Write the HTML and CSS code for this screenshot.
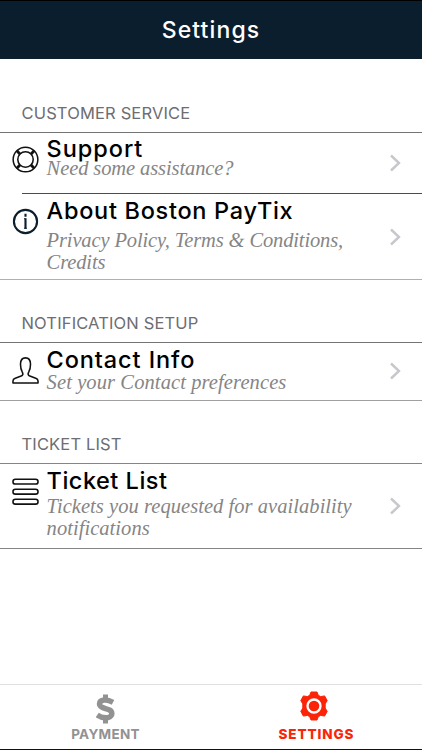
FILE: index.html
```html
<!DOCTYPE html>
<html lang="en">
<head>
    <meta charset="UTF-8">
    <meta name="viewport" content="width=device-width, initial-scale=1.0">
    <title>Settings</title>
    <link rel="stylesheet" href="styles.css">
</head>
<body>

    <!-- Header -->
    <header class="header">
        <h1>Settings</h1>
    </header>

    <main class="content">
        <section class="support-section">
            <h2>CUSTOMER SERVICE</h2>
            <div class="row row-support">
                <svg class="icon" viewBox="0 0 28 28">
                    <circle cx="14" cy="14" r="12.8"/>
                    <circle cx="14" cy="14" r="8"/>
                    <path class="thick" d="M5 5l3.5 3.5M23 5l-3.5 3.5M5 23l3.5-3.5M23 23l-3.5-3.5"/>
                </svg>
                <div class="text">
                    <h3>Support</h3>
                    <p>Need some assistance?</p>
                </div>
                <svg class="chevron" viewBox="0 0 12 18"><path d="M2 1.5l8 7.5-8 7.5"/></svg>
            </div>
            <div class="row row-about">
                <svg class="icon navy" viewBox="0 0 28 28">
                    <circle cx="14" cy="14" r="12"/>
                    <path d="M14 10.5v11M14 6v3"/>
                    <path d="M12.500 11.100h1.500M12.500 21h3" stroke-width="1"/>
                </svg>
                <div class="text">
                    <h3>About Boston PayTix</h3>
                    <p>Privacy Policy, Terms &amp; Conditions,<br>Credits</p>
                </div>
                <svg class="chevron" viewBox="0 0 12 18"><path d="M2 1.5l8 7.5-8 7.5"/></svg>
            </div>
        </section>

        <section class="contact-section">
            <h2>NOTIFICATION SETUP</h2>
            <div class="row row-contact">
                <svg class="icon" viewBox="0 0 28 28">
                    <path d="M1 27v-2.200c0-1.500 1-2.300 2.400-2.800l6.100-2.200c1.900-.8 2.300-2.200 1.200-4C9.200 13.200 8.800 10.500 8.800 7.500 8.800 3.400 10.500.9 14 .9s5.200 2.500 5.200 6.600c0 3-.4 5.700-1.900 8.300-1.100 1.800-.7 3.200 1.200 4l6.100 2.200c1.400.5 2.400 1.300 2.400 2.800V27z"/>
                </svg>
                <div class="text">
                    <h3>Contact Info</h3>
                    <p>Set your Contact preferences</p>
                </div>
                <svg class="chevron" viewBox="0 0 12 18"><path d="M2 1.5l8 7.5-8 7.5"/></svg>
            </div>
        </section>

        <section class="ticket-section">
            <h2>TICKET LIST</h2>
            <div class="row row-ticket">
                <svg class="icon" viewBox="0 0 28 28">
                    <rect x="1" y="1.300" width="26" height="5" rx="2.500"/>
                    <rect x="1" y="11.700" width="26" height="5" rx="2.500"/>
                    <rect x="1" y="22.100" width="26" height="5" rx="2.500"/>
                </svg>
                <div class="text">
                    <h3>Ticket List</h3>
                    <p>Tickets you requested for availability<br>notifications</p>
                </div>
                <svg class="chevron" viewBox="0 0 12 18"><path d="M2 1.5l8 7.5-8 7.5"/></svg>
            </div>
        </section>
    </main>

    <!-- Bottom tabs -->
    <nav class="tabs">
        <a class="tab">
            <svg class="dollar" viewBox="0 0 19 30">
                <path d="M9.500 .5v6M9.500 23.500v6" stroke-width="5"/>
                <path d="M17 8.300C13.500 6.400 10.500 5.900 8.200 6.100 5.300 6.400 3.500 7.900 3.500 10.100c0 6 12.300 2.900 12.300 9.400 0 2.700-2.700 4.300-6.300 4.300-3 0-5.900-1-8.300-2.700" stroke-width="5.500"/>
            </svg>
            <span>PAYMENT</span>
        </a>
        <a class="tab active">
            <svg class="gear" viewBox="0 0 30 30">
                <path d="M12 1h6l1.300 3.300 2.300 1.300 4-.7 2.600 4.700-2 3.300v4.200l2 3.300-2.600 4.700-4-.7-2.300 1.300L18 29h-6l-1.300-3.300-2.300-1.300-4 .7-2.600-4.700 2-3.300v-4.200l-2-3.300 2.600-4.700 4 .7 2.300-1.300z"/>
                <circle cx="15" cy="15" r="6.500"/>
            </svg>
            <span>SETTINGS</span>
        </a>
    </nav>

</body>
</html>
```

FILE: styles.css
```css
* {
    box-sizing: border-box;
}

body {
    margin: 0;
    height: 750px;
    display: flex;
    flex-direction: column;
    background-color: #ffffff;
    font-family: Inter, "Liberation Sans", sans-serif;
    border-bottom: 1px solid #111111;
    overflow: hidden;
}

h1, h2, h3, p {
    margin: 0;
    white-space: nowrap;
}

.header {
    height: 59px;
    border-top: 1px solid #000000;
    background-color: #0a1e2e;
    color: #ffffff;
    display: flex;
    align-items: center;
    justify-content: center;
}

h1 {
    font-size: 23px;
    font-weight: 500;
    letter-spacing: 1.1px;
}

.content {
    flex: 1;
}

h2 {
    height: 29px;
    padding-left: 21.5px;
    font-size: 16.5px;
    line-height: 20px;
    font-weight: 400;
    letter-spacing: 0.15px;
    color: #6d6d72;
}

.support-section {
    padding-top: 44px;
}

.contact-section, .ticket-section {
    padding-top: 33px;
}

/* Setting rows */
.row {
    display: flex;
    padding-left: 12px;
    padding-right: 21px;
    border-top: 1px solid #747474;
}

.row-support {
    height: 61px;
}

.row-about {
    height: 87px;
    border-top: none;
    border-bottom: 1px solid #b0b0b0;
    background: linear-gradient(#4a4a4f, #4a4a4f) 22px 0 / 100% 1px no-repeat;
    padding-top: 1px;
}

.row-contact {
    height: 59px;
    border-bottom: 1px solid #a0a0a0;
}

.row-ticket {
    height: 86px;
    border-color: #858585;
    border-bottom: 1px solid #858585;
}

.icon {
    width: 27px;
    height: 27px;
    margin-top: 13px;
    fill: none;
    stroke: #111111;
    stroke-width: 1.6;
    stroke-linejoin: round;
}

.row-contact .icon, .row-ticket .icon {
    margin-top: 14px;
}

.thick {
    stroke-width: 3;
}

.row-about .navy {
    margin-top: 14px;
    stroke: #0a1e2e;
    stroke-width: 2.2;
}

.text {
    flex: 1;
    padding-top: 6px;
    padding-left: 7.6px;
}

h3 {
    font-size: 23.5px;
    line-height: 20px;
    font-weight: 500;
    letter-spacing: 0.7px;
    color: #000000;
}

p {
    font-family: "Liberation Serif", serif;
    font-style: italic;
    font-size: 20.5px;
    line-height: 22px;
    letter-spacing: 0.05px;
    color: #858585;
}

.row-support h3 {
    letter-spacing: 0.95px;
}

.row-support p {
    line-height: 18px;
    letter-spacing: -0.1px;
}

.row-about .text {
    padding-top: 7px;
}

.row-about p {
    margin-top: 8px;
    letter-spacing: -0.13px;
}

.row-contact .text {
    padding-top: 7px;
}

.row-contact h3 {
    letter-spacing: 0.9px;
}

.row-contact p {
    line-height: 20px;
    margin-top: 2px;
    letter-spacing: 0.1px;
}

.row-contact .chevron {
    position: relative;
    top: -1px;
}

.row-ticket .text {
    padding-top: 7px;
}

.row-ticket h3 {
    letter-spacing: 0.5px;
}

.row-ticket p {
    margin-top: 4px;
}

.chevron {
    align-self: center;
    width: 12px;
    height: 18px;
    fill: none;
    stroke: #c7c7cc;
    stroke-width: 2.4;
}

/* Tab bar */
.tabs {
    height: 65px;
    display: flex;
    border-top: 1px solid #e0e0e0;
}

.tab {
    flex: 1;
    display: flex;
    flex-direction: column;
    align-items: center;
    color: #929292;
    font-size: 13.5px;
    line-height: 16px;
    font-weight: 700;
    letter-spacing: 0.3px;
}

.tab.active {
    color: #fb2408;
    font-weight: 800;
    letter-spacing: 0.9px;
}

.dollar {
    width: 19px;
    height: 30px;
    margin-top: 9px;
    margin-bottom: 2px;
    fill: none;
    stroke: currentColor;
}

.gear {
    width: 30px;
    height: 30px;
    margin-top: 6px;
    margin-right: 5px;
    margin-bottom: 5px;
    fill: currentColor;
    stroke: currentColor;
    stroke-linejoin: round;
}

.gear circle {
    stroke: #ffffff;
    stroke-width: 2.3;
}
```
